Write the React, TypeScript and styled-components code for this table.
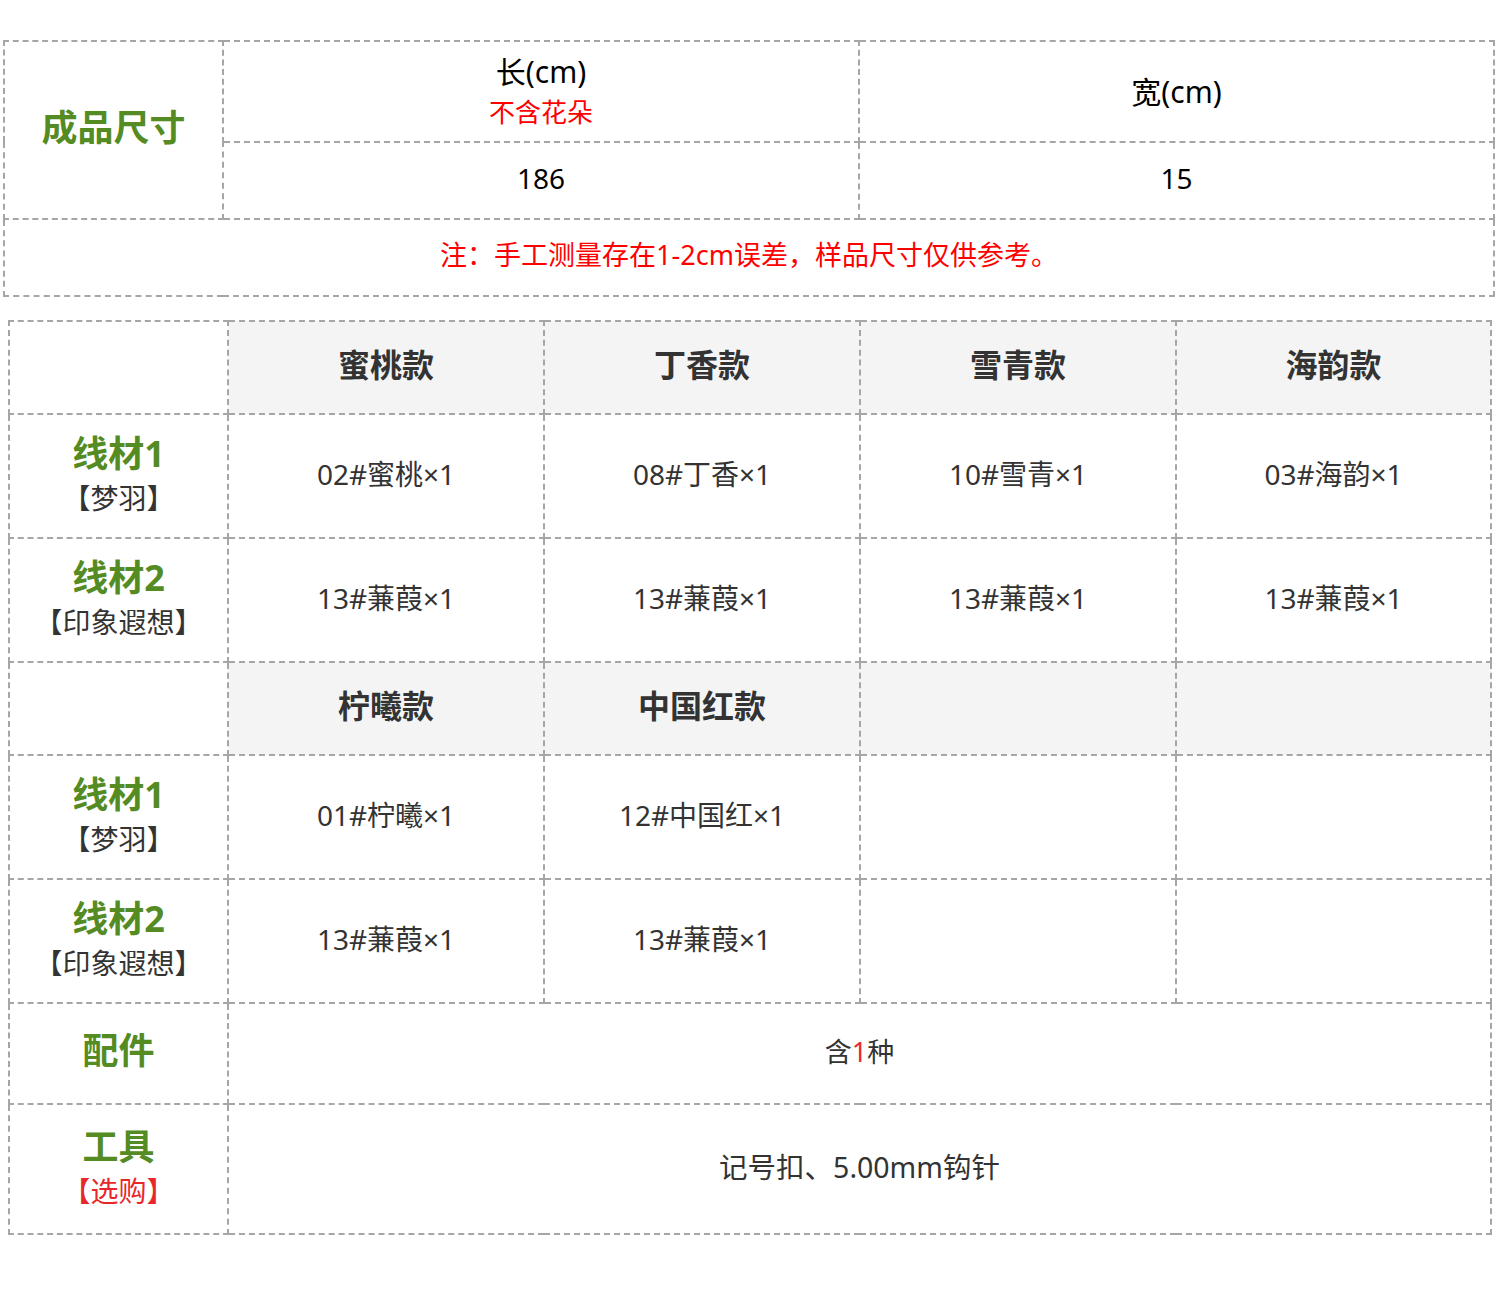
import React from "react";
import styled, { createGlobalStyle } from "styled-components";

const Global = createGlobalStyle`
  html, body { margin: 0; padding: 0; background: #fff; }
  body { font-family: "Noto Sans", "Noto Sans CJK SC", sans-serif; }
`;

const Page = styled.div`
  width: 1500px;
  padding-top: 40px;
  padding-bottom: 59px;
`;

const Table = styled.table<{ $width: number; $left: number; $top?: number }>`
  border-collapse: collapse;
  table-layout: fixed;
  width: ${(p) => p.$width}px;
  margin-left: ${(p) => p.$left}px;
  margin-top: ${(p) => p.$top ?? 0}px;
`;

const Row = styled.tr<{ $h: number }>`
  height: ${(p) => p.$h}px;
`;

const Cell = styled.td<{ $shade?: boolean; $dark?: boolean }>`
  border: 2px dashed #a6a6a6;
  padding: 0 0 5px;
  text-align: center;
  vertical-align: middle;
  background: ${(p) => (p.$shade ? "#f4f4f4" : "#fff")};
  color: ${(p) => (p.$dark ? "#000" : "#333")};
  font-size: 28px;
  line-height: 40px;
`;

const GreenTitle = styled.div<{ $size?: number }>`
  color: #548b23;
  font-weight: 700;
  font-size: ${(p) => p.$size ?? 36}px;
  line-height: 48px;
`;

const SubLabel = styled.div<{ $red?: boolean }>`
  color: ${(p) => (p.$red ? "#e8272b" : "#333")};
  font-size: 28px;
  line-height: 40px;
`;

const HeadText = styled.div`
  font-size: 30px;
  line-height: 40px;
  padding-top: 6px;
  color: #000;
`;

const RedNote = styled.div<{ $size?: number }>`
  color: #ff0000;
  font-size: ${(p) => p.$size ?? 26}px;
  line-height: 40px;
`;

const Style = styled.span`
  font-weight: 700;
  font-size: 32px;
  color: #333;
`;

const Red = styled.span`
  color: #e8272b;
`;

const Value = styled.span<{ $size?: number }>`
  font-size: ${(p) => p.$size ?? 28}px;
`;

function Label({ title, sub, red }: { title: string; sub?: string; red?: boolean }) {
  return (
    <Cell>
      <GreenTitle $size={36}>{title}</GreenTitle>
      {sub && <SubLabel $red={red}>{sub}</SubLabel>}
    </Cell>
  );
}

export default function App() {
  const first = ["蜜桃款", "丁香款", "雪青款", "海韵款"];
  const firstYarn1 = ["02#蜜桃×1", "08#丁香×1", "10#雪青×1", "03#海韵×1"];
  const yarn2 = "13#蒹葭×1";
  return (
    <Page>
      <Global />
      <Table $width={1490} $left={3}>
        <colgroup>
          <col style={{ width: 219 }} />
          <col style={{ width: 636 }} />
          <col style={{ width: 635 }} />
        </colgroup>
        <tbody>
          <Row $h={101}>
            <Cell rowSpan={2}>
              <GreenTitle>成品尺寸</GreenTitle>
            </Cell>
            <Cell $dark>
              <HeadText>长(cm)</HeadText>
              <RedNote>不含花朵</RedNote>
            </Cell>
            <Cell $dark>
              <HeadText>宽(cm)</HeadText>
            </Cell>
          </Row>
          <Row $h={77}>
            <Cell $dark>186</Cell>
            <Cell $dark>15</Cell>
          </Row>
          <Row $h={77}>
            <Cell colSpan={3}>
              <RedNote $size={27}>注：手工测量存在1-2cm误差，样品尺寸仅供参考。</RedNote>
            </Cell>
          </Row>
        </tbody>
      </Table>

      <Table $width={1482} $left={8} $top={23}>
        <colgroup>
          <col style={{ width: 219 }} />
          <col style={{ width: 316 }} />
          <col style={{ width: 316 }} />
          <col style={{ width: 316 }} />
          <col style={{ width: 315 }} />
        </colgroup>
        <tbody>
          <Row $h={93}>
            <Cell />
            {first.map((s) => (
              <Cell key={s} $shade>
                <Style>{s}</Style>
              </Cell>
            ))}
          </Row>
          <Row $h={124}>
            <Label title="线材1" sub="【梦羽】" />
            {firstYarn1.map((s) => (
              <Cell key={s}>{s}</Cell>
            ))}
          </Row>
          <Row $h={124}>
            <Label title="线材2" sub="【印象遐想】" />
            {first.map((s) => (
              <Cell key={s}>{yarn2}</Cell>
            ))}
          </Row>
          <Row $h={93}>
            <Cell />
            <Cell $shade>
              <Style>柠曦款</Style>
            </Cell>
            <Cell $shade>
              <Style>中国红款</Style>
            </Cell>
            <Cell $shade />
            <Cell $shade />
          </Row>
          <Row $h={124}>
            <Label title="线材1" sub="【梦羽】" />
            <Cell>01#柠曦×1</Cell>
            <Cell>12#中国红×1</Cell>
            <Cell />
            <Cell />
          </Row>
          <Row $h={124}>
            <Label title="线材2" sub="【印象遐想】" />
            <Cell>{yarn2}</Cell>
            <Cell>{yarn2}</Cell>
            <Cell />
            <Cell />
          </Row>
          <Row $h={101}>
            <Label title="配件" />
            <Cell colSpan={4}>
              <Value $size={27}>
                含<Red>1</Red>种
              </Value>
            </Cell>
          </Row>
          <Row $h={130}>
            <Label title="工具" sub="【选购】" red />
            <Cell colSpan={4}>
              <Value $size={28.5}>记号扣、5.00mm钩针</Value>
            </Cell>
          </Row>
        </tbody>
      </Table>
    </Page>
  );
}
